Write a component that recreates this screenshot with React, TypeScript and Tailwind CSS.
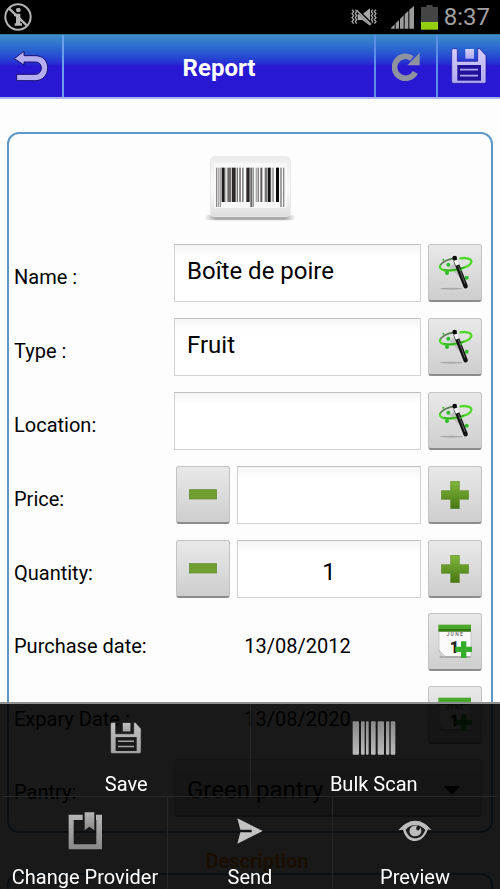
import { useId, useState } from "react";
import type { ReactNode } from "react";

const buttonLook =
  "flex h-[58px] w-[54px] shrink-0 items-center justify-center rounded-[3px] border border-[#c3c3c3] border-b-2 border-b-[#8c8c8c] bg-linear-to-b from-[#e9e9e9] to-[#cecece]";
const inputLook =
  "h-[58px] w-full min-w-0 flex-1 border border-[#d2d2d2] border-t-[#c0c0c0] bg-linear-to-b from-[#f4f4f4] to-white to-20% text-2xl text-black outline-none";

function FloppyIcon({ size, from, to, inner }: { size: number; from: string; to: string; inner: string }) {
  const id = useId();
  return (
    <svg width={size} height={size} viewBox="0 0 108 108" aria-hidden="true">
      <defs>
        <linearGradient id={id} x1="0" y1="0" x2="0" y2="1">
          <stop offset="0" stopColor={from} />
          <stop offset="1" stopColor={to} />
        </linearGradient>
      </defs>
      <path
        d="M6 2H16Q19 2 19 5V40H80V2H86L105 23V101Q105 106 100 106H6Q2 106 2 101V6Q2 2 6 2Z"
        fill={`url(#${id})`}
        stroke={inner}
        strokeWidth="2"
      />
      <rect x="43" y="3" width="26" height="29" fill={`url(#${id})`} />
      <rect x="19" y="51" width="71" height="47" fill={inner} />
      <path d="M27 65H81M27 83H81" stroke={to} strokeWidth="5" />
    </svg>
  );
}

function BackIcon() {
  return (
    <svg width="36" height="32" viewBox="0 0 106 96" aria-hidden="true">
      <path
        d="M3 26L32 3V17H66C88 17 103 32 103 53C103 75 88 92 66 92H10V73H66C77 73 84 65 84 54C84 43 77 36 66 36H32V45Z"
        fill="#b5aef0"
        stroke="#17106e"
        strokeWidth="3"
        strokeLinejoin="round"
      />
    </svg>
  );
}

function RefreshIcon() {
  return (
    <svg width="28" height="29" viewBox="0 0 84 87" aria-hidden="true">
      <path d="M70 61A33 33 0 1 1 60 19" fill="none" stroke="#8f93a0" strokeWidth="17" />
      <path d="M83 2V40H46Z" fill="#8f93a0" />
    </svg>
  );
}

function BlockedIcon() {
  return (
    <svg width="28" height="28" viewBox="0 0 84 84" aria-hidden="true">
      <g fill="none" stroke="#b5b5b5">
        <circle cx="42" cy="42" r="38" strokeWidth="6" />
        <path d="M15 16L69 68" strokeWidth="7" />
      </g>
      <path d="M30 32H49V61H54V68H32V61H36V40H30Z" fill="#b5b5b5" />
      <circle cx="43" cy="21" r="7" fill="#b5b5b5" />
    </svg>
  );
}

function MutedIcon() {
  return (
    <svg width="26" height="20" viewBox="0 0 78 60" aria-hidden="true">
      <g fill="none" stroke="#a8a8a8" strokeWidth="4">
        <path d="M3 8L8 14L3 20L8 26L3 32L8 38L3 44L8 50M13 8L17 14L13 20L17 26L13 32L17 38L13 44L17 50" />
        <path d="M75 8L70 14L75 20L70 26L75 32L70 38L75 44L70 50M65 8L61 14L65 20L61 26L65 32L61 38L65 44L61 50" />
      </g>
      <path d="M20 22H34L57 4V56L34 39H20Z" fill="#a8a8a8" />
      <path d="M16 6L64 54" stroke="#000" strokeWidth="9" />
      <path d="M16 9L60 53" stroke="#a8a8a8" strokeWidth="5" />
    </svg>
  );
}

function SignalIcon() {
  return (
    <svg width="23" height="23" viewBox="0 0 69 69" fill="#9b9b9b" aria-hidden="true">
      <path d="M0 68V66L11 55V68ZM14 68V52L24 42V68ZM27 68V39L38 28V68ZM41 68V25L52 14V68ZM55 68V11L69 0V68Z" />
    </svg>
  );
}

function BatteryIcon() {
  return (
    <svg width="17" height="25" viewBox="0 0 51 75" aria-hidden="true">
      <path d="M16 0H35V6H51V51H0V6H16Z" fill="#454545" />
      <rect y="51" width="51" height="23" fill="#93cf10" />
    </svg>
  );
}

const bars: [number, number, string][] = [
  [18, 4, "#8d8989"], [24, 3, "#aaa"], [29, 3, "#777"], [35, 9, "#1d1a1a"], [46, 3, "#aaa"],
  [52, 12, "#706a6a"], [66, 11, "#2e2929"], [80, 4, "#777"], [87, 6, "#918c8c"], [96, 5, "#888"],
  [109, 10, "#2a2626"], [121, 5, "#666"], [127, 5, "#999"], [137, 5, "#aaa"], [143, 4, "#8b8585"],
  [151, 6, "#635d5d"], [164, 7, "#777"], [173, 9, "#111"], [185, 7, "#aaa"], [198, 9, "#090909"],
  [211, 4, "#777"], [219, 4, "#888"],
];

function BarcodePicture() {
  return (
    <svg width="92" height="68" viewBox="0 0 276 204" role="img" aria-label="Barcode">
      <defs>
        <linearGradient id="plate" x1="0" y1="0" x2="0" y2="1">
          <stop offset="0" stopColor="#ececec" />
          <stop offset="0.55" stopColor="#fafafa" />
          <stop offset="1" stopColor="#dedede" />
        </linearGradient>
        <linearGradient id="plateShadow">
          <stop offset="0" stopColor="#bbb" stopOpacity="0" />
          <stop offset="0.12" stopColor="#a5a5a5" />
          <stop offset="0.88" stopColor="#a5a5a5" />
          <stop offset="1" stopColor="#bbb" stopOpacity="0" />
        </linearGradient>
      </defs>
      <rect x="2" y="184" width="272" height="13" rx="6" fill="url(#plateShadow)" />
      <rect x="2" y="181" width="272" height="19" rx="9" fill="url(#plateShadow)" opacity="0.3" />
      <rect x="19" y="8" width="240" height="180" rx="14" fill="url(#plate)" stroke="#e9e9e9" strokeWidth="3" />
      <rect x="30" y="26" width="219" height="136" rx="6" fill="#f8f8f8" />
      <g transform="translate(18 0)">
        {bars.map(([x, width, fill]) => (
          <rect
            key={x}
            x={x}
            y="41"
            width={width}
            height={x < 32 || (x > 120 && x < 130) || x > 209 ? 118 : 103}
            fill={fill}
          />
        ))}
      </g>
    </svg>
  );
}

function WandIcon() {
  return (
    <svg width="50" height="54" viewBox="4 6 150 162" aria-hidden="true">
      <ellipse cx="68" cy="134" rx="34" ry="3" fill="#a9a9a9" />
      <path d="M82 55L104 112L62 70Z" fill="#999" opacity="0.4" />
      <path d="M78 43C61 44 39 54 34 66" fill="none" stroke="#5d7a55" strokeWidth="5" />
      <path d="M34 66C32 79 51 81 72 79C105 76 130 63 128 51C126 42 108 41 95 43" fill="none" stroke="#4fd927" strokeWidth="7" strokeLinecap="round" />
      <path d="M45 76C66 82 91 76 107 70" fill="none" stroke="#2eab1c" strokeWidth="4" />
      <path d="M81 51L111 127" stroke="#111" strokeWidth="13" strokeLinecap="round" />
      <path d="M81 48L87 63" stroke="#f5f5f5" strokeWidth="12" />
      <path d="M89 66L109 119" stroke="#8b8b8b" strokeWidth="2" />
      <circle cx="78" cy="42" r="7" fill="#080808" />
      <g fill="#2dbd28">
        <circle cx="59" cy="62" r="6" />
        <circle cx="55" cy="87" r="6" />
        <circle cx="114" cy="101" r="6" />
        <circle cx="44" cy="47" r="3" />
        <circle cx="97" cy="78" r="3" />
      </g>
    </svg>
  );
}

function MinusIcon() {
  return (
    <svg width="28" height="28" viewBox="0 0 84 84" aria-hidden="true">
      <rect x="1" y="26" width="82" height="28" fill="#6fa02f" stroke="#5d8b27" strokeWidth="2" />
    </svg>
  );
}

function PlusIcon() {
  return (
    <svg width="28" height="28" viewBox="0 0 84 84" aria-hidden="true">
      <defs>
        <linearGradient id="plus" x1="0" y1="0" x2="0" y2="1">
          <stop offset="0" stopColor="#80b83b" />
          <stop offset="1" stopColor="#477612" />
        </linearGradient>
      </defs>
      <path d="M29 1H55V29H83V55H55V83H29V55H1V29H29Z" fill="url(#plus)" stroke="#5d8b27" strokeWidth="2" />
    </svg>
  );
}

function CalendarIcon() {
  return (
    <svg width="36" height="36" viewBox="0 0 108 108" aria-hidden="true">
      <path d="M6 22H102V98H24L6 86Z" fill="#fafafa" stroke="#b9b9b9" strokeWidth="2" />
      <path d="M8 99H100" stroke="#888" strokeWidth="3" />
      <path d="M6 78L26 98L12 95Z" fill="#ddd" stroke="#999" />
      <rect x="4" y="2" width="98" height="14" fill="#49a72b" />
      <rect x="4" y="15" width="98" height="8" fill="#34790d" />
      <text x="53" y="37" textAnchor="middle" fontFamily="Roboto, sans-serif" fontSize="15" fontWeight="700" fill="#777">
        J  U  N  E
      </text>
      <text x="52" y="86" textAnchor="middle" fontFamily="Roboto, sans-serif" fontSize="48" fontWeight="900" fill="#222">
        1
      </text>
      <path d="M72 52H88V68H105V84H88V102H72V84H55V68H72Z" fill="#35ad2c" />
    </svg>
  );
}

function BulkIcon() {
  return (
    <svg width="44" height="34" viewBox="0 0 132 102" aria-hidden="true">
      <defs>
        <linearGradient id="bulk" x1="0" y1="0" x2="0" y2="1">
          <stop offset="0" stopColor="#888" />
          <stop offset="1" stopColor="#bbb" />
        </linearGradient>
      </defs>
      <g fill="url(#bulk)">
        <rect x="2" y="1" width="19" height="100" rx="3" />
        <rect x="27" y="1" width="11" height="100" rx="3" />
        <rect x="42" y="1" width="8" height="100" rx="3" />
        <rect x="57" y="1" width="14" height="100" rx="3" />
        <rect x="77" y="1" width="19" height="100" rx="3" />
        <rect x="102" y="1" width="10" height="100" rx="3" />
        <rect x="116" y="1" width="14" height="100" rx="3" />
      </g>
    </svg>
  );
}

function BookmarkIcon() {
  return (
    <svg width="34" height="38" viewBox="0 0 102 114" aria-hidden="true">
      <defs>
        <linearGradient id="book" x1="0" y1="0" x2="0" y2="1">
          <stop offset="0" stopColor="#b5b5b5" />
          <stop offset="1" stopColor="#888" />
        </linearGradient>
      </defs>
      <path d="M2 8H44V24H17V97H85V24H84V8H102V112H2Z" fill="url(#book)" />
      <path d="M50 1H79V55L64 44L50 55Z" fill="url(#book)" />
    </svg>
  );
}

function SendIcon() {
  return (
    <svg width="26" height="26" viewBox="0 0 78 78" fill="#c2c2c2" aria-hidden="true">
      <path d="M1 1L77 39L1 77L10 43H44V35H10Z" />
    </svg>
  );
}

function EyeIcon() {
  return (
    <svg width="34" height="22" viewBox="0 0 102 66" aria-hidden="true">
      <path
        d="M1 31C16 12 34 2 52 2C70 2 86 12 101 31L90 28C82 50 68 63 51 63C34 63 20 51 15 29Z"
        fill="#bdbdbd"
      />
      <path d="M23 29C33 19 42 15 52 15C64 15 75 21 82 30C75 48 64 55 52 55C39 55 28 46 23 29Z" fill="#1b1b1b" />
      <path d="M37 24C30 39 39 49 52 49C66 49 75 36 67 22C66 33 57 33 55 28C53 23 56 19 60 17C49 15 42 17 37 24Z" fill="#bdbdbd" />
    </svg>
  );
}

function Row({ label, htmlFor, children }: { label: string; htmlFor?: string; children: ReactNode }) {
  return (
    <div className="flex items-center">
      <label htmlFor={htmlFor} className="w-[165px] shrink-0 pt-2 pl-[5px] text-xl">
        {label}
      </label>
      {children}
    </div>
  );
}

function TextRow({ id, label, value }: { id: string; label: string; value: string }) {
  return (
    <Row label={label} htmlFor={id}>
      <div className="flex min-w-0 flex-1 gap-[7px]">
        <input id={id} defaultValue={value} className={`${inputLook} px-3 pb-1`} />
        <button aria-label="Autofill" className={buttonLook}>
          <WandIcon />
        </button>
      </div>
    </Row>
  );
}

function NumberRow({ id, label, initial }: { id: string; label: string; initial: string }) {
  const [value, setValue] = useState(initial);
  const step = (by: number) => setValue(String(Math.max(0, (Number(value) || 0) + by)));

  return (
    <Row label={label} htmlFor={id}>
      <div className="flex min-w-0 flex-1 gap-[7px]">
        <button aria-label="Decrease" onClick={() => step(-1)} className={`${buttonLook} ml-0.5`}>
          <MinusIcon />
        </button>
        <input
          id={id}
          inputMode="decimal"
          value={value}
          onChange={(e) => setValue(e.target.value)}
          className={`${inputLook} px-2 pt-1.5 text-center`}
        />
        <button aria-label="Increase" onClick={() => step(1)} className={buttonLook}>
          <PlusIcon />
        </button>
      </div>
    </Row>
  );
}

function DateRow({ id, label, value }: { id: string; label: string; value: string }) {
  return (
    <Row label={label} htmlFor={id}>
      <div className="flex min-w-0 flex-1 items-center gap-[7px]">
        <output className="min-w-0 flex-1 pt-2 text-center text-xl">{value}</output>
        <button id={id} className={buttonLook}>
          <CalendarIcon />
        </button>
      </div>
    </Row>
  );
}

function MenuItem({ label, children }: { label: string; children: ReactNode }) {
  return (
    <button className="flex h-[92px] flex-1 basis-0 flex-col items-center justify-between whitespace-nowrap">
      <span className="flex h-[68px] items-center">{children}</span>
      <span className="text-xl leading-6">{label}</span>
    </button>
  );
}

export default function App() {
  return (
    <div className="flex h-screen flex-col overflow-hidden bg-[#fdfdfd] font-['Roboto',sans-serif] text-black">
      <div className="flex h-[34px] shrink-0 items-center justify-between bg-black pr-2.5 pl-1">
        <BlockedIcon />
        <div className="flex items-center">
          <MutedIcon />
          <span className="ml-3.5">
            <SignalIcon />
          </span>
          <span className="mr-1.5 ml-[7px]">
            <BatteryIcon />
          </span>
          <span className="text-2xl text-[#a0a0a0]">8:37</span>
        </div>
      </div>

      <header className="flex h-[65px] shrink-0 border-t border-b-2 border-t-[#35789f] border-b-[#a9b3f3] bg-linear-to-b from-[#3f8dc9] to-[#2918d3] to-50%">
        <button aria-label="Back" className="flex w-16 items-center justify-center border-r-2 border-[#6aa0ea]">
          <BackIcon />
        </button>
        <h1 className="flex flex-1 items-center justify-center pt-1 text-2xl font-bold text-white">Report</h1>
        <button aria-label="Refresh" className="flex w-[62px] items-center justify-center border-l-2 border-[#5b8ee6]">
          <RefreshIcon />
        </button>
        <button aria-label="Save report" className="flex w-16 items-center justify-center border-l-2 border-[#5b8ee6]">
          <FloppyIcon size={36} from="#d4d0fa" to="#b0a8ee" inner="#20129a" />
        </button>
      </header>

      <main className="min-h-0 flex-1 overflow-hidden px-[7px] pt-[33px]">
        <form
          onSubmit={(e) => e.preventDefault()}
          className="rounded-xl border-2 border-[#5f97c4] bg-[#fdfdfd] pr-[9px] pb-3.5"
        >
          <div className="flex justify-center pt-5 pb-[22px] pl-[9px]">
            <BarcodePicture />
          </div>
          <div className="flex flex-col gap-4">
            <TextRow id="name" label="Name :" value="Boîte de poire" />
            <TextRow id="type" label="Type :" value="Fruit" />
            <TextRow id="location" label="Location:" value="" />
            <NumberRow id="price" label="Price:" initial="" />
            <NumberRow id="quantity" label="Quantity:" initial="1" />
          </div>
          <div className="mt-[15px] flex flex-col gap-[15px]">
            <DateRow id="purchased" label="Purchase date:" value="13/08/2012" />
            <DateRow id="expiry" label="Expary Date :" value="13/08/2020" />
            <Row label="Pantry:" htmlFor="pantry">
              <div className="relative min-w-0 flex-1">
                <select
                  id="pantry"
                  className="h-[58px] w-full appearance-none rounded-[3px] border border-[#c3c3c3] border-b-2 border-b-[#8c8c8c] bg-linear-to-b from-[#e9e9e9] to-[#cecece] px-3 pt-1 text-2xl outline-none"
                >
                  <option>Green pantry</option>
                </select>
                <svg
                  width="16"
                  height="9"
                  viewBox="0 0 16 9"
                  className="pointer-events-none absolute top-[27px] right-[22px]"
                  aria-hidden="true"
                >
                  <path d="M0 0H16L8 9Z" />
                </svg>
              </div>
            </Row>
          </div>
        </form>
        <h2 className="mt-4 pl-3.5 text-center text-xl leading-6 font-bold text-[#ff8c00]">Description</h2>
        <div className="h-32 rounded-xl border-2 border-[#5f97c4]" />
      </main>

      <nav
        aria-label="Options"
        className="fixed inset-x-0 bottom-0 border-t-2 border-[#8f8f8f] bg-black/90 bg-clip-padding px-[3px] text-white"
      >
        <div className="flex divide-x divide-[#282828] border-b border-[#282828]">
          <MenuItem label="Save">
            <FloppyIcon size={32} from="#c2c2c2" to="#a3a3a3" inner="#1a1a1a" />
          </MenuItem>
          <MenuItem label="Bulk Scan">
            <BulkIcon />
          </MenuItem>
        </div>
        <div className="flex divide-x divide-[#282828]">
          <MenuItem label="Change Provider">
            <BookmarkIcon />
          </MenuItem>
          <MenuItem label="Send">
            <SendIcon />
          </MenuItem>
          <MenuItem label="Preview">
            <EyeIcon />
          </MenuItem>
        </div>
      </nav>
    </div>
  );
}
